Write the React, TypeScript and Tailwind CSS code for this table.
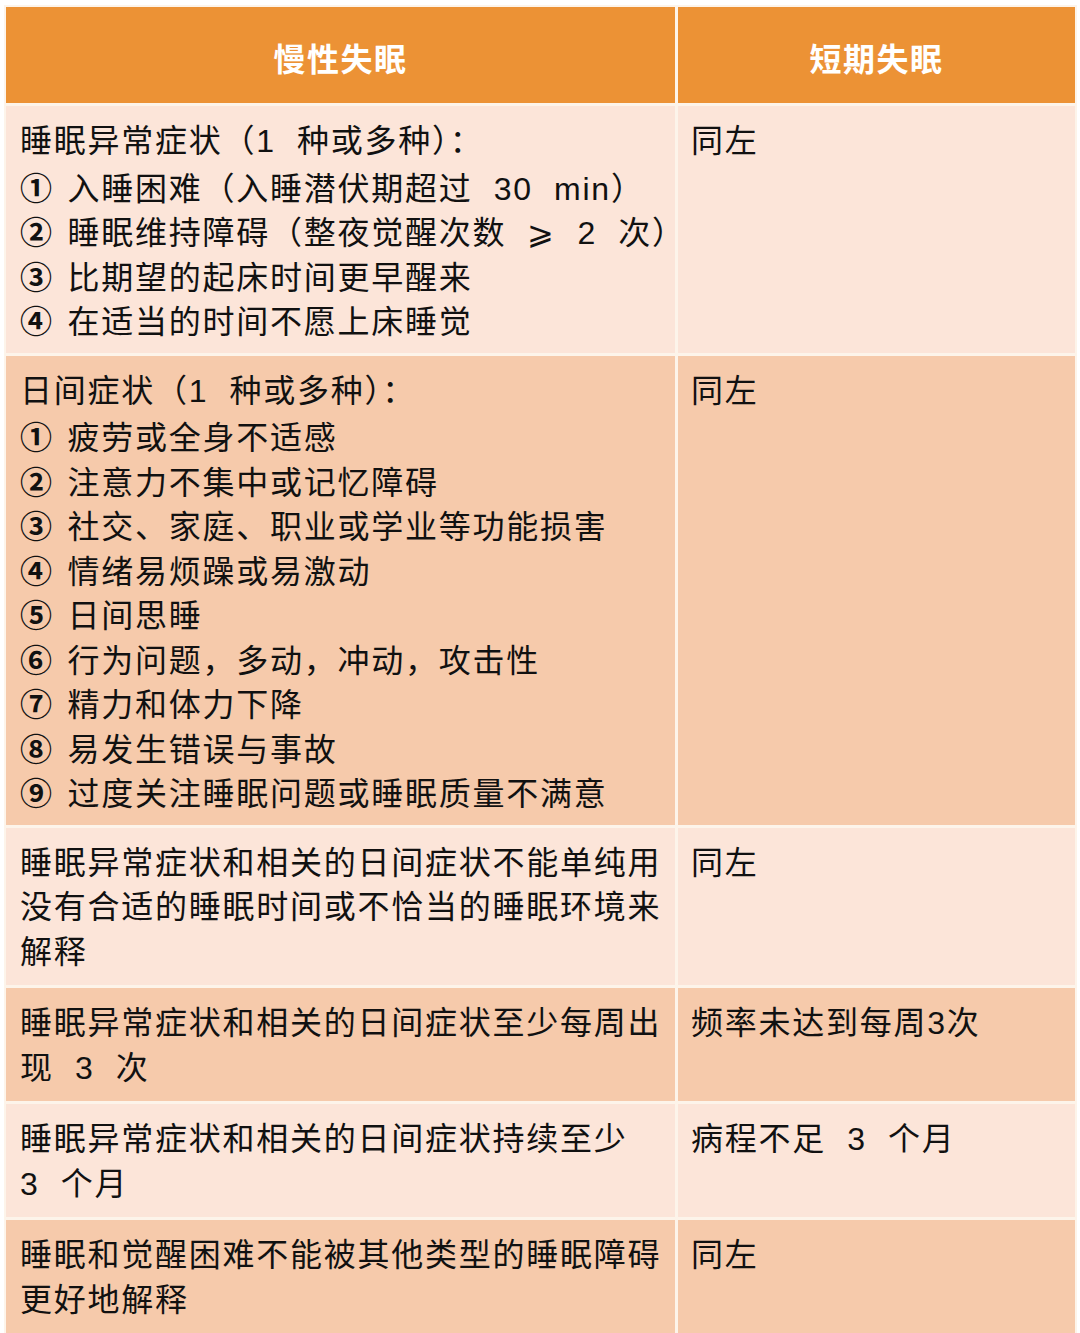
const rows = [
  {
    bg: 'bg-[#fce5d9]',
    left: [
      '睡眠异常症状（1  种或多种）：',
      '① 入睡困难（入睡潜伏期超过  30  min）',
      '② 睡眠维持障碍（整夜觉醒次数  ⩾  2  次）',
      '③ 比期望的起床时间更早醒来',
      '④ 在适当的时间不愿上床睡觉',
    ],
    right: '同左',
  },
  {
    bg: 'bg-[#f6caab]',
    left: [
      '日间症状（1  种或多种）：',
      '① 疲劳或全身不适感',
      '② 注意力不集中或记忆障碍',
      '③ 社交、家庭、职业或学业等功能损害',
      '④ 情绪易烦躁或易激动',
      '⑤ 日间思睡',
      '⑥ 行为问题，多动，冲动，攻击性',
      '⑦ 精力和体力下降',
      '⑧ 易发生错误与事故',
      '⑨ 过度关注睡眠问题或睡眠质量不满意',
    ],
    right: '同左',
  },
  {
    bg: 'bg-[#fce5d9]',
    left: [
      '睡眠异常症状和相关的日间症状不能单纯用',
      '没有合适的睡眠时间或不恰当的睡眠环境来',
      '解释',
    ],
    right: '同左',
  },
  {
    bg: 'bg-[#f6caab]',
    left: ['睡眠异常症状和相关的日间症状至少每周出', '现  3  次'],
    right: '频率未达到每周3次',
  },
  {
    bg: 'bg-[#fce5d9]',
    left: ['睡眠异常症状和相关的日间症状持续至少', '3  个月'],
    right: '病程不足  3  个月',
  },
  {
    bg: 'bg-[#f6caab]',
    left: ['睡眠和觉醒困难不能被其他类型的睡眠障碍', '更好地解释'],
    right: '同左',
  },
];

const circled = '①②③④⑤⑥⑦⑧⑨';

const Line = ({ text }: { text: string }) => {
  if (circled.includes(text[0])) {
    return (
      <div className="h-[44.5px]">
        <span className="font-['Noto_Sans_CJK_SC',sans-serif] font-semibold mr-[3px]">{text[0]}</span>
        {text.slice(1)}
      </div>
    );
  }
  return <div className="h-[44.5px]">{text}</div>;
};

const App = () => {
  return (
    <div className="w-[1080px] h-[1333px] bg-white pt-[5px] pl-[4px] pr-[3px] font-['Liberation_Sans','Noto_Sans_CJK_SC',sans-serif] text-[#111]">
      <div className="grid grid-cols-[669px_1fr] gap-[3px] bg-[#fdf4ea] border-2 border-[#fdf4ea]">
        <div className="bg-[#ec9235] h-[96px] pt-[9px] flex items-center justify-center text-white font-bold text-[32px] tracking-[1.5px]">
          慢性失眠
        </div>
        <div className="bg-[#ec9235] h-[96px] pt-[9px] flex items-center justify-center text-white font-bold text-[32px] tracking-[1.5px]">
          短期失眠
        </div>
        {rows.map((row, i) => (
          <div key={i} className="contents">
            <div className={`${row.bg} pl-[14px] pt-[13px] pb-[11px] text-[32px] leading-[44.5px] tracking-[1.75px] whitespace-pre`}>
              {row.left.map((line, j) => (
                <Line key={j} text={line} />
              ))}
            </div>
            <div className={`${row.bg} pl-[13px] pt-[13px] text-[32px] leading-[44.5px] tracking-[1.75px] whitespace-pre`}>
              {row.right}
            </div>
          </div>
        ))}
      </div>
    </div>
  );
};

export default App;
